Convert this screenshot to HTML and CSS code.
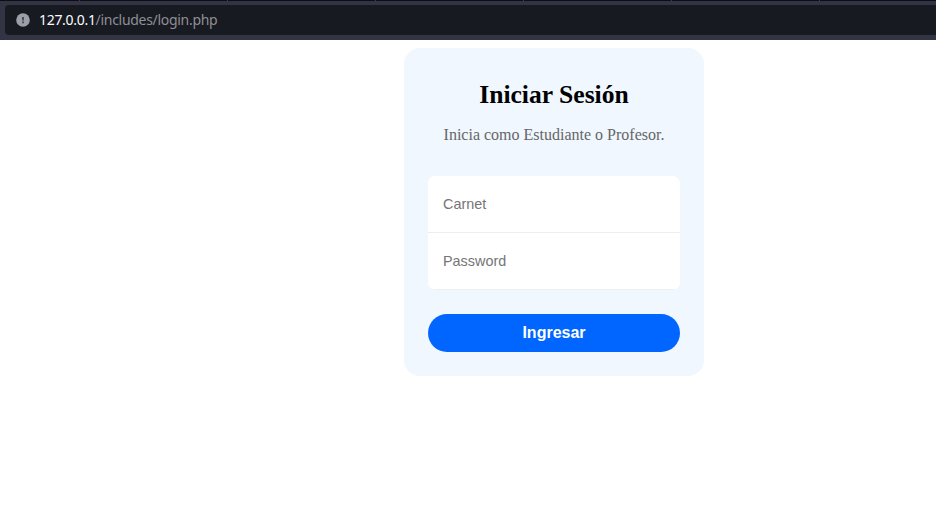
FILE: index.html
```html
<!DOCTYPE html>
<html lang="es">
<head>
<meta charset="utf-8">
<title>Iniciar Sesión</title>
<link rel="stylesheet" href="styles.css">
</head>
<body>
<header class="browser">
  <div class="tabs"></div>
  <div class="address">
    <svg class="info" viewBox="0 0 14 14" width="14" height="14" aria-hidden="true">
      <circle cx="7" cy="7" r="6.8" fill="#9c9fa8"/>
      <path d="M6 4h2v3.5H6zM6 8.5h2v1.7H6z" fill="#4b4d58"/>
    </svg>
    <span class="url"><span class="host">127.0.0.1</span><span class="path">/includes/login.php</span></span>
  </div>
</header>
<main class="page">
  <form class="card">
    <h1 class="title">Iniciar Sesión</h1>
    <p class="subtitle">Inicia como Estudiante o Profesor.</p>
    <div class="fields">
      <input class="field" type="text" placeholder="Carnet">
      <input class="field" type="password" placeholder="Password">
    </div>
    <button class="submit" type="button">Ingresar</button>
  </form>
</main>
</body>
</html>
```

FILE: styles.css
```css
* {
  box-sizing: border-box;
}

body {
  margin: 0;
  background: #fff;
  font-family: "Liberation Serif", serif;
  overflow: hidden;
}

.browser {
  height: 40px;
  background: #323444;
}

.tabs {
  height: 1px;
  background: repeating-linear-gradient(to right, #0e0d16 0 79px, #3a3a46 79px 80px, #0e0d16 80px 148px);
}

.address {
  display: flex;
  align-items: center;
  height: 30px;
  margin: 4px 0 0 5px;
  padding-left: 11px;
  border-radius: 4px 0 0 4px;
  background: #181a21;
}

.info {
  margin-right: 9px;
}

.url {
  font: 14px/20px "Noto Sans", sans-serif;
  letter-spacing: -0.3px;
  white-space: nowrap;
}

.host {
  color: #fbfbfe;
}

.path {
  color: #8e8f95;
}

.page {
  padding: 8px 0 0 404px;
}

.card {
  width: 300px;
  height: 328px;
  padding: 32px 24px 24px;
  border-radius: 16px;
  background: #f0f7ff;
  text-align: center;
}

.title {
  margin: 0;
  font-size: 25.6px;
  line-height: 29px;
}

.subtitle {
  margin: 16px 0 32px;
  color: #666;
  font-size: 16px;
  line-height: 19px;
}

.fields {
  overflow: hidden;
  margin-bottom: 24px;
  border-radius: 8px;
  background: #fff;
}

.field {
  display: block;
  width: 100%;
  height: 57px;
  padding: 0 15px;
  border: 0;
  border-bottom: 1px solid #eee;
  outline: 0;
  background: #fff;
  font: 14.4px "Liberation Sans", sans-serif;
}

.field::placeholder {
  color: #757575;
}

.submit {
  display: block;
  width: 100%;
  height: 38px;
  padding: 0;
  border: 0;
  border-radius: 24px;
  background: #06f;
  color: #fff;
  font: bold 16px "Liberation Sans", sans-serif;
}
```
